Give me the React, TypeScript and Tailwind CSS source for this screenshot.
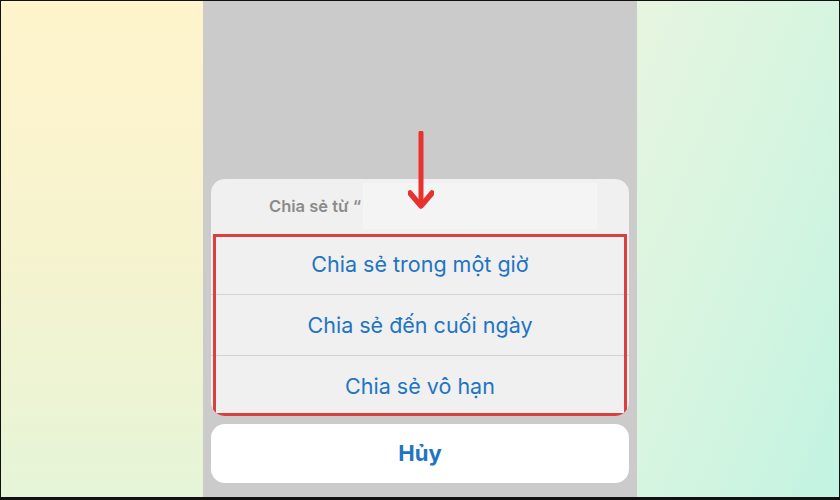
import React from "react";

const OPTIONS = ["Chia sẻ trong một giờ", "Chia sẻ đến cuối ngày", "Chia sẻ vô hạn"];

function DownArrow() {
  return (
    <svg
      className="pointer-events-none absolute left-[407px] top-[130px]"
      width="26"
      height="80"
      viewBox="0 0 26 80"
    >
      <line x1="13" y1="2" x2="13" y2="74" stroke="#e8322f" strokeWidth="5" strokeLinecap="round" />
      <polyline
        points="2,62 13,75 24,62"
        fill="none"
        stroke="#e8322f"
        strokeWidth="5.5"
        strokeLinecap="round"
        strokeLinejoin="round"
      />
    </svg>
  );
}

export default function App() {
  return (
    <div
      className="relative flex h-[500px] w-[840px] border-x border-t border-b-[3px] border-[#111]"
      style={{ fontFamily: "Inter, 'Noto Sans', sans-serif" }}
    >
      {/* nền bên trái */}
      <div className="w-[202px] bg-gradient-to-b from-[#fff4cc] via-[#f6f3cf] to-[#e6f5d8]" />

      {/* màn hình điện thoại */}
      <div className="flex w-[434px] flex-col justify-end bg-[#cbcbcb] px-2 pb-[14px]">
        <div className="overflow-hidden rounded-[14px] bg-[#f0f0f0]">
          <div className="relative flex h-[55px] items-center pl-[58px]">
            <div className="absolute left-[152px] top-[4px] h-[46px] w-[234px] bg-[#f4f4f4]" />
            <span className="relative text-[16.5px] font-semibold text-[#8b8b8b]">Chia sẻ từ “</span>
          </div>
          <div className="relative">
            {OPTIONS.map((label, i) => (
              <div key={label}>
                {i > 0 && <div className="h-px bg-[#d3d3d3]" />}
                <div className="flex h-[60px] items-center justify-center text-[21.5px] text-[#2274c3]">
                  {label}
                </div>
              </div>
            ))}
            {/* khung đỏ chú thích */}
            <div className="pointer-events-none absolute inset-y-0 left-[2px] right-[2px] border-[3px] border-[#d9403e]" />
          </div>
        </div>

        <div className="mt-2 flex h-[59px] items-center justify-center rounded-[14px] bg-white text-[22px] font-bold text-[#2274c3]">
          Hủy
        </div>
      </div>

      {/* nền bên phải */}
      <div className="flex-1 bg-gradient-to-br from-[#e7f5e0] via-[#d6f5e0] to-[#c2f3e2]" />

      <DownArrow />
    </div>
  );
}
